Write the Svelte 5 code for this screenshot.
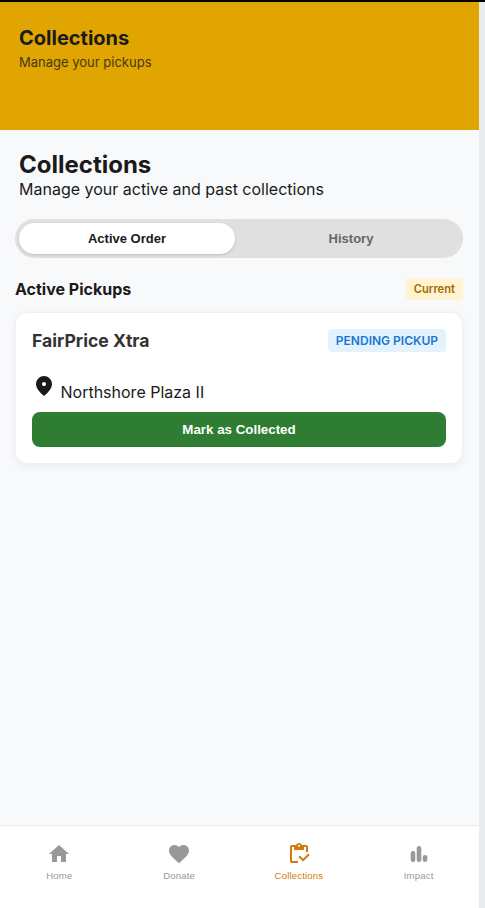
<script>
  const tabs = ["Active Order", "History"];
  let activeTab = $state("Active Order");

  const pickups = [
    { store: "FairPrice Xtra", status: "PENDING PICKUP", place: "Northshore Plaza II" },
  ];

  const links = [
    { label: "Home", icon: "M10 20v-6h4v6h5v-8h3L12 3 2 12h3v8z" },
    {
      label: "Donate",
      icon: "M12 21.35l-1.45-1.32C5.4 15.36 2 12.28 2 8.5 2 5.42 4.42 3 7.5 3c1.74 0 3.41.81 4.5 2.09C13.09 3.81 14.76 3 16.5 3 19.58 3 22 5.42 22 8.5c0 3.78-3.4 6.86-8.55 11.54z",
    },
    {
      label: "Collections",
      icon: "M5 21q-.825 0-1.412-.587T3 19V5q0-.825.588-1.412T5 3h4.175q.275-.875 1.075-1.437T12 1q1 0 1.788.563T14.85 3H19q.825 0 1.413.588T21 5v5h-2V5h-2v3H7V5H5v14h6v2zM16.1 19.6l-4.7-4.7 1.4-1.4 3.3 3.3 5.2-5.2 1.4 1.4zM12 4.7q.425 0 .713-.288T13 3.7t-.288-.712T12 2.7t-.712.288T11 3.7t.288.713T12 4.7",
    },
    {
      label: "Impact",
      icon: "M6 9Q8.3 9 8.3 11V18Q8.3 20 6 20T3.7 18V11Q3.7 9 6 9zM12 4Q14.3 4 14.3 6V18Q14.3 20 12 20T9.7 18V6Q9.7 4 12 4zM18 13Q20.3 13 20.3 15V18Q20.3 20 18 20T15.7 18V15Q15.7 13 18 13z",
    },
  ];
  let current = $state("Collections");
</script>

<div class="app">
  <header class="header">
    <h1>Collections</h1>
    <p>Manage your pickups</p>
  </header>

  <main class="content">
    <div class="intro">
      <h2>Collections</h2>
      <p>Manage your active and past collections</p>
    </div>

    <div class="tabs">
      {#each tabs as tab}
        <button class="tab" class:active={tab === activeTab} onclick={() => (activeTab = tab)}>{tab}</button>
      {/each}
    </div>

    <div class="section-head">
      <h3>Active Pickups</h3>
      <span class="badge">Current</span>
    </div>

    {#each pickups as pickup}
      <article class="card">
        <div class="card-head">
          <h4>{pickup.store}</h4>
          <span class="status">{pickup.status}</span>
        </div>
        <div class="place">
          <svg viewBox="0 0 24 24" width="24" height="24">
            <path d="M12 12q.825 0 1.413-.587T14 10t-.587-1.412T12 8t-1.412.588T10 10t.588 1.413T12 12m0 10q-4.025-3.425-6.012-6.362T4 10.2q0-3.75 2.413-5.975T12 2t5.588 2.225T20 10.2q0 2.5-1.987 5.438T12 22" />
          </svg>
          <span>{pickup.place}</span>
        </div>
        <button class="collect">Mark as Collected</button>
      </article>
    {/each}
  </main>

  <nav class="nav">
    {#each links as link}
      <button class="link" class:current={link.label === current} onclick={() => (current = link.label)}>
        <svg viewBox="0 0 24 24" width="24" height="24"><path d={link.icon} /></svg>
        <span>{link.label}</span>
      </button>
    {/each}
  </nav>
</div>

<style>
  :global(body) {
    background: #e8ecef;
    font-family: Inter, sans-serif;
  }
  :global(#app) {
    border-top: 2px solid #000;
  }
  h1,
  h2,
  h3,
  h4,
  p {
    margin: 0;
  }
  button {
    border: none;
    cursor: pointer;
    font-family: "Liberation Sans", Arial, sans-serif;
    padding: 0;
  }
  svg {
    display: block;
    fill: currentColor;
  }

  .app {
    background: #f8f9fb;
    color: #1a1a1a;
    display: flex;
    flex-direction: column;
    height: 906px;
    width: 479px;
  }

  .header {
    background: #e0a500;
    box-sizing: border-box;
    height: 128px;
    padding: 24px 19px;
  }
  .header h1 {
    font-size: 20px;
    font-weight: 700;
    line-height: 24px;
  }
  .header p {
    font-size: 13px;
    line-height: 16px;
    margin-top: 4px;
    opacity: 0.8;
  }

  .content {
    flex: 1;
    padding: 20px 16px 0 15px;
  }
  .intro {
    padding: 0 4px;
  }
  .intro h2 {
    font-size: 24px;
    font-weight: 700;
    line-height: 29px;
  }
  .intro p {
    font-size: 16px;
    line-height: 20px;
  }

  .tabs {
    background: #e0e0e0;
    border-radius: 20px;
    display: flex;
    gap: 8px;
    margin-top: 20px;
    padding: 4px;
  }
  .tab {
    background: transparent;
    border-radius: 16px;
    color: #666;
    flex: 1;
    font-size: 13px;
    font-weight: 600;
    height: 31px;
  }
  .tab.active {
    background: #fff;
    box-shadow: 0 1px 3px rgba(0, 0, 0, 0.15);
    color: #1a1a1a;
  }

  .section-head {
    align-items: center;
    display: flex;
    justify-content: space-between;
    margin: 20px 0 12px;
  }
  .section-head h3 {
    font-size: 16px;
    font-weight: 700;
  }
  .badge {
    background: #fff3d1;
    border-radius: 4px;
    color: #a66a00;
    font-size: 11.2px;
    font-weight: 600;
    line-height: 14px;
    padding: 4px 8px;
  }

  .card {
    background: #fff;
    border: 1px solid #f0f0f0;
    border-radius: 12px;
    box-shadow: 0 2px 8px rgba(0, 0, 0, 0.06);
    padding: 16px;
  }
  .card-head {
    align-items: center;
    display: flex;
    justify-content: space-between;
  }
  .card-head h4 {
    color: #333;
    font-size: 17.6px;
    font-weight: 700;
  }
  .status {
    background: #e3f2fd;
    border-radius: 4px;
    color: #1976d2;
    font-size: 12px;
    font-weight: 600;
    line-height: 15px;
    padding: 4px 8px;
  }
  .place {
    align-items: flex-start;
    display: flex;
    font-size: 16px;
    gap: 4.5px;
    height: 38px;
    margin-top: 22px;
  }
  .place span {
    line-height: 20px;
    padding-top: 8px;
  }
  .collect {
    background: #2e7d32;
    border-radius: 8px;
    color: #fff;
    display: block;
    font-size: 13.33px;
    font-weight: 600;
    height: 35px;
    width: 100%;
  }

  .nav {
    background: #fff;
    border-top: 1px solid #e8ebef;
    box-sizing: border-box;
    display: flex;
    height: 83px;
    padding-top: 16px;
  }
  .link {
    align-items: center;
    background: none;
    color: #999;
    display: flex;
    flex: 1;
    flex-direction: column;
    font-size: 9.6px;
    gap: 4px;
    letter-spacing: 0.15px;
    padding-right: 1px;
  }
  .link.current {
    color: #d17a0d;
  }
</style>
